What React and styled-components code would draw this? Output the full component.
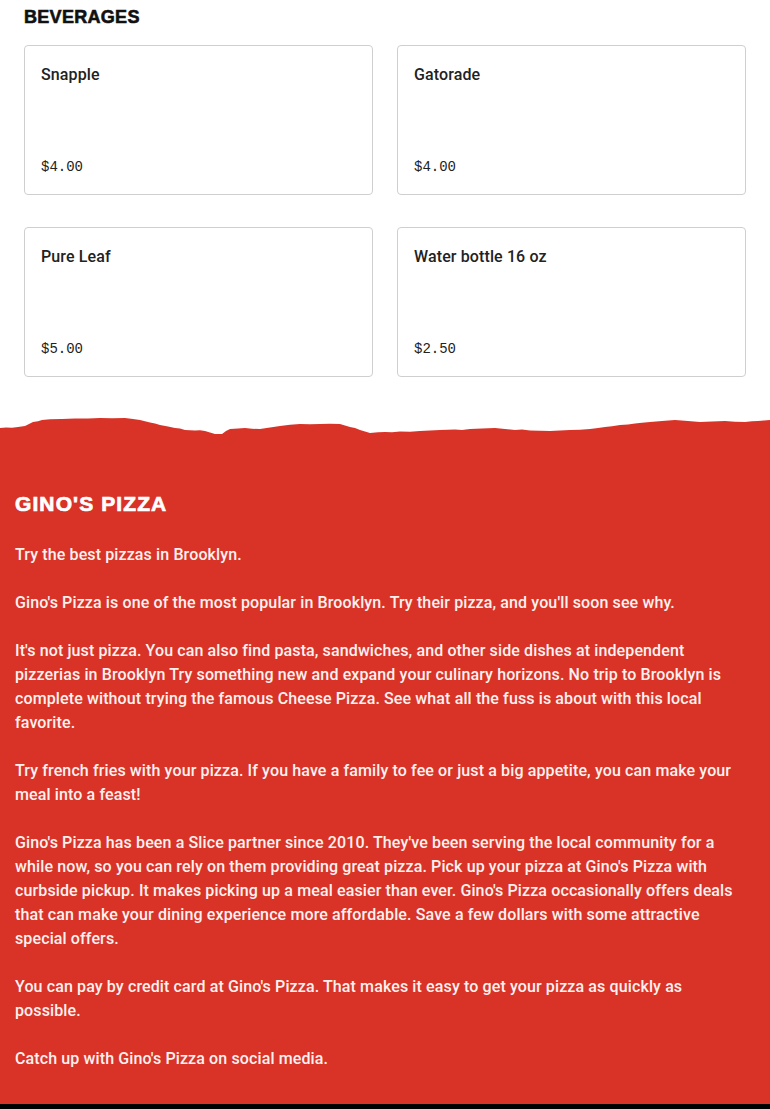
import React from "react";
import styled, { createGlobalStyle } from "styled-components";

const Global = createGlobalStyle`
  html, body { margin: 0; padding: 0; background: #fff; }
  body { font-family: Roboto, "Liberation Sans", sans-serif; -webkit-font-smoothing: antialiased; }
  * { box-sizing: border-box; }
`;

const Page = styled.div`
  width: 770px;
  display: flex;
  flex-direction: column;
`;

const MenuSection = styled.section`
  padding: 6px 24px 0;
`;

const SectionTitle = styled.h2`
  margin: 0 0 17px;
  font-family: "Liberation Sans", Arial, sans-serif;
  font-weight: 700;
  font-size: 18px;
  line-height: 22px;
  letter-spacing: 0.3px;
  -webkit-text-stroke: 0.6px #111;
  color: #111;
  text-transform: uppercase;
`;

const Grid = styled.div`
  display: grid;
  grid-template-columns: 1fr 1fr;
  column-gap: 24px;
  row-gap: 32px;
`;

const Card = styled.div`
  height: 150px;
  border: 1px solid #cfcfcf;
  border-radius: 4px;
  padding: 17px 16px 17px;
  display: flex;
  flex-direction: column;
  justify-content: space-between;
  background: #fff;
`;

const ItemName = styled.div`
  font-family: Roboto, "Liberation Sans", sans-serif;
  font-weight: 500;
  font-size: 16px;
  line-height: 24px;
  letter-spacing: 0.12px;
  color: #222;
`;

const Price = styled.div`
  font-family: "Liberation Mono", "DejaVu Sans Mono", monospace;
  font-size: 14px;
  line-height: 20px;
  color: #222;
`;

const Torn = styled.svg`
  display: block;
  width: 770px;
  height: 21px;
  margin-top: 38px;
`;

const About = styled.section`
  background: #d93328;
  padding: 54px 25px 33px 15px;
  color: #fdf1ef;
`;

const AboutTitle = styled.h2`
  margin: 0 0 26px;
  font-family: "Liberation Sans", Arial, sans-serif;
  font-weight: 700;
  font-size: 21px;
  line-height: 27px;
  letter-spacing: 1.1px;
  -webkit-text-stroke: 0.7px #fff;
  color: #fff;
  text-transform: uppercase;
`;

const Paragraph = styled.p`
  margin: 0 0 24px;
  font-family: Roboto, "Liberation Sans", sans-serif;
  font-weight: 500;
  font-size: 16px;
  line-height: 24px;
  letter-spacing: 0.12px;
  &:last-child { margin-bottom: 0; }
`;

const Footer = styled.footer`
  background: #000;
  height: 40px;
`;

const items = [
  { name: "Snapple", price: "$4.00" },
  { name: "Gatorade", price: "$4.00" },
  { name: "Pure Leaf", price: "$5.00" },
  { name: "Water bottle 16 oz", price: "$2.50" },
];

const paragraphs = [
  "Try the best pizzas in Brooklyn.",
  "Gino's Pizza is one of the most popular in Brooklyn. Try their pizza, and you'll soon see why.",
  "It's not just pizza. You can also find pasta, sandwiches, and other side dishes at independent pizzerias in Brooklyn Try something new and expand your culinary horizons. No trip to Brooklyn is complete without trying the famous Cheese Pizza. See what all the fuss is about with this local favorite.",
  "Try french fries with your pizza. If you have a family to fee or just a big appetite, you can make your meal into a feast!",
  "Gino's Pizza has been a Slice partner since 2010. They've been serving the local community for a while now, so you can rely on them providing great pizza. Pick up your pizza at Gino's Pizza with curbside pickup. It makes picking up a meal easier than ever. Gino's Pizza occasionally offers deals that can make your dining experience more affordable. Save a few dollars with some attractive special offers.",
  "You can pay by credit card at Gino's Pizza. That makes it easy to get your pizza as quickly as possible.",
  "Catch up with Gino's Pizza on social media.",
];

const edge =
  "M0,13 L6,12.6 L12,12.8 L18,12 L25,11 L29,9 L33,7 L38,6.2 L42,5 L50,4.2 L62,4 L75,3.4 L88,3.6 L100,3 L112,3.3 L125,3 L133,4 L140,5 L146,6.5 L150,7.5 L155,8.4 L160,10 L168,11.5 L175,13 L180,13.6 L185,15 L195,15.5 L200,15.2 L205,16 L210,17.5 L215,19 L222,19 L226,16 L230,14 L238,13.5 L245,13 L252,13.8 L260,14 L270,12.5 L280,11 L290,9.8 L300,9 L310,9.3 L320,9 L330,8.7 L340,9 L345,10.5 L350,12 L355,13 L360,15 L365,16.5 L370,18 L378,17.2 L385,17 L392,17.3 L400,16.5 L410,16.7 L420,16 L430,15.6 L440,15 L455,14.6 L462,14.9 L470,14 L482,13.6 L495,13 L505,14 L515,15 L522,14.6 L530,15.5 L540,15.7 L550,16 L560,15.4 L570,15 L580,14.7 L590,14 L598,13 L605,12 L612,11.2 L620,10 L628,9.4 L635,8.5 L642,7.7 L650,7 L662,6 L675,5 L688,6 L700,7 L712,6.4 L725,6 L735,6.8 L745,7 L752,6.2 L758,6 L764,5.4 L770,5 L770,21 L0,21 Z";

export default function App() {
  return (
    <Page>
      <Global />
      <MenuSection>
        <SectionTitle>Beverages</SectionTitle>
        <Grid>
          {items.map((it) => (
            <Card key={it.name}>
              <ItemName>{it.name}</ItemName>
              <Price>{it.price}</Price>
            </Card>
          ))}
        </Grid>
      </MenuSection>
      <Torn viewBox="0 0 770 21" preserveAspectRatio="none" aria-hidden="true">
        <path d={edge} fill="#d93328" />
      </Torn>
      <About>
        <AboutTitle>Gino's Pizza</AboutTitle>
        {paragraphs.map((p, i) => (
          <Paragraph key={i}>{p}</Paragraph>
        ))}
      </About>
      <Footer />
    </Page>
  );
}
